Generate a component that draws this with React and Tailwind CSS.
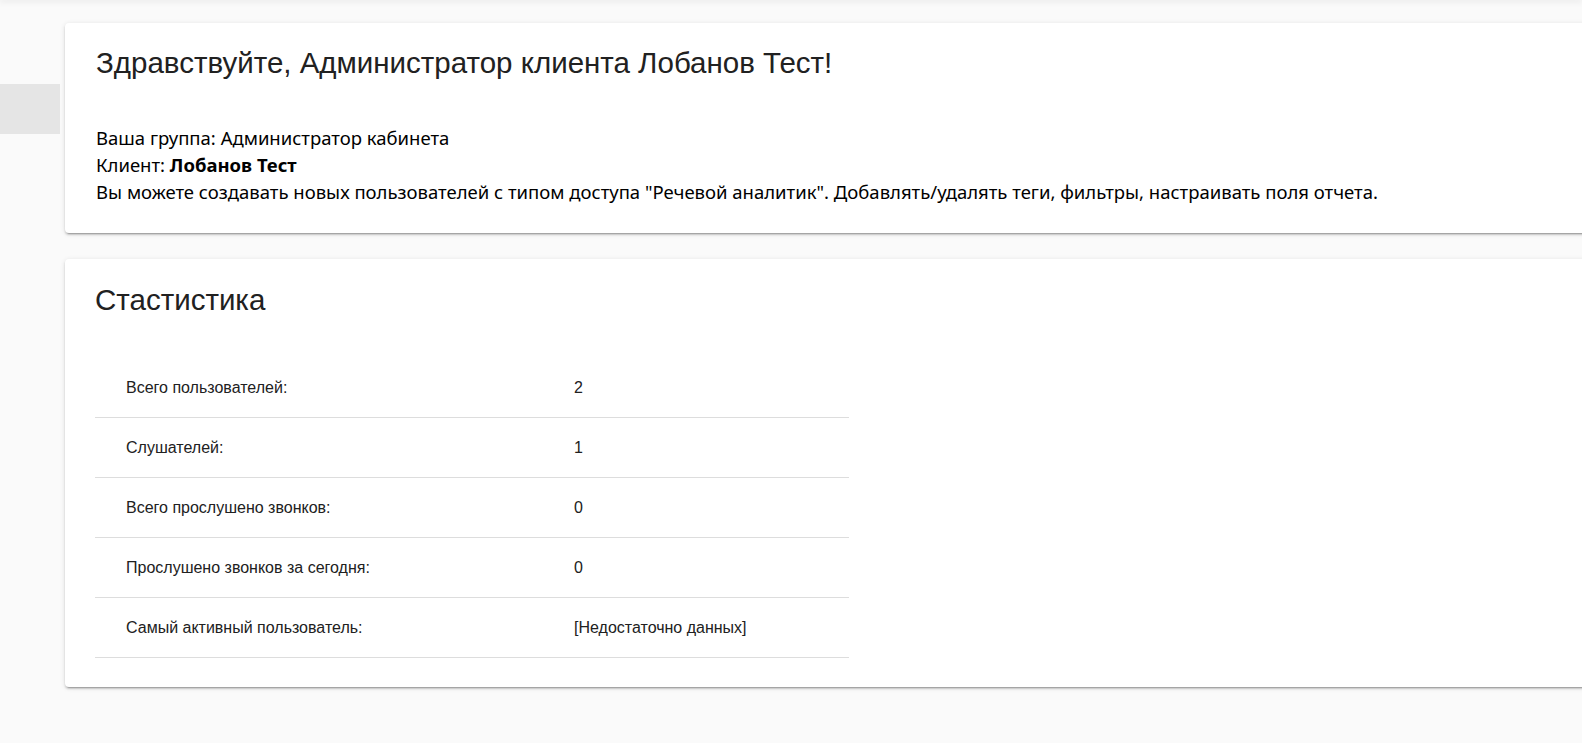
export default function App() {
  const rows = [
    ["Всего пользователей:", "2"],
    ["Слушателей:", "1"],
    ["Всего прослушено звонков:", "0"],
    ["Прослушено звонков за сегодня:", "0"],
    ["Самый активный пользователь:", "[Недостаточно данных]"],
  ];
  const card =
    "bg-white rounded-[4px] shadow-[0_3px_1px_-2px_rgba(0,0,0,0.2),0_2px_2px_0_rgba(0,0,0,0.14),0_1px_5px_0_rgba(0,0,0,0.12)]";
  return (
    <div className="w-full h-[743px] overflow-hidden bg-[#fafafa] relative">
      <div className="h-0 shadow-[0_0_6px_1px_rgba(0,0,0,0.15)]" />
      <div className="flex">
        <div className="w-[60px] shrink-0">
          <div className="mt-[84px] h-[50px] bg-[#e5e5e5]" />
        </div>
        <div className="w-[1540px] shrink-0 pl-[5px] pt-[23px] flex flex-col gap-[26px]">
          <div className={`${card} h-[210px] pl-[31px] pt-[22px]`}>
            <h1 className="text-[29.5px] leading-[36px] text-[#212121] font-['Liberation_Sans',Arial,sans-serif]">
              Здравствуйте, Администратор клиента Лобанов Тест!
            </h1>
            <div className="mt-[43px] text-[18.5px] leading-[27px] text-black font-['Noto_Sans',sans-serif]">
              <div>Ваша группа: Администратор кабинета</div>
              <div>
                Клиент: <b className="font-bold">Лобанов Тест</b>
              </div>
              <div>
                Вы можете создавать новых пользователей с типом доступа "Речевой аналитик". Добавлять/удалять теги, фильтры, настраивать поля отчета.
              </div>
            </div>
          </div>
          <div className={`${card} h-[428px] pl-[30px] pt-[23px]`}>
            <h2 className="text-[29.5px] leading-[36px] text-[#212121] font-['Liberation_Sans',Arial,sans-serif]">
              Стастистика
            </h2>
            <div className="mt-[40px] w-[754px] font-['Liberation_Sans',Arial,sans-serif] text-[16px] text-[#212121]">
              {rows.map(([k, v]) => (
                <div key={k} className="flex h-[60px] items-center border-b border-[#dddddd]">
                  <div className="w-[479px] pl-[31px]">{k}</div>
                  <div>{v}</div>
                </div>
              ))}
            </div>
          </div>
        </div>
      </div>
    </div>
  );
}
